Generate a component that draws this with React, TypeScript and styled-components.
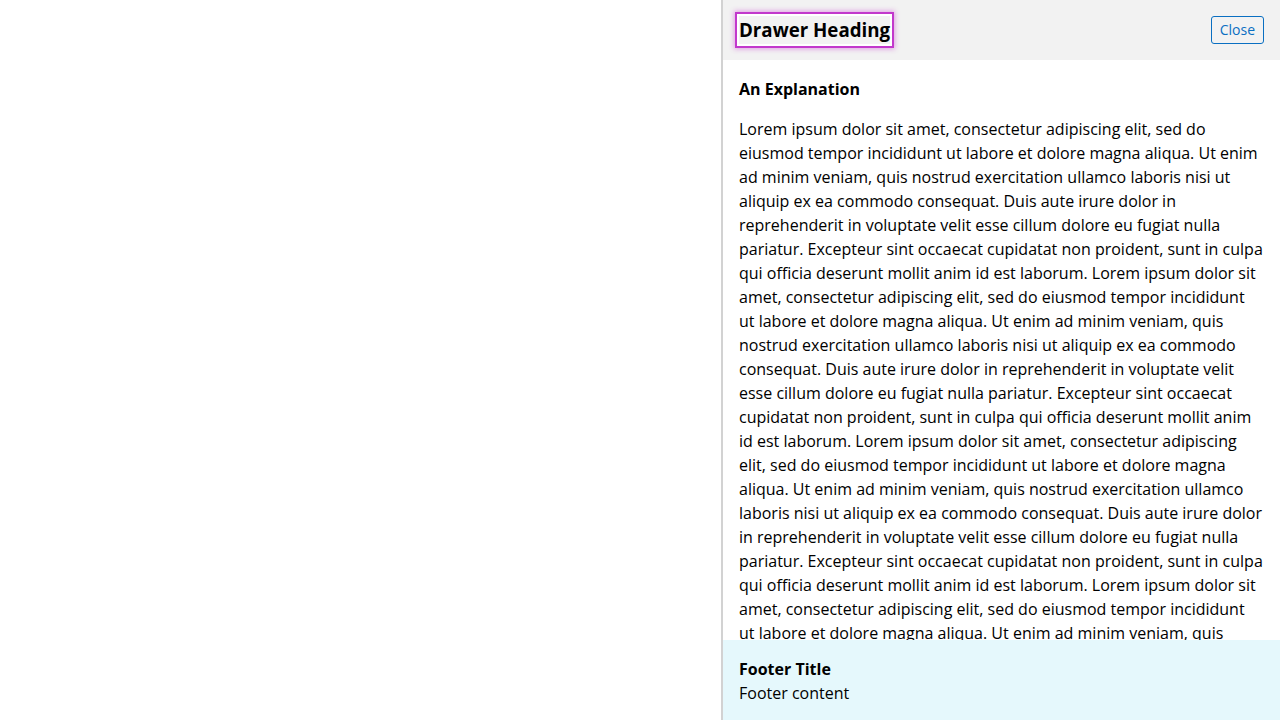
import { FC } from 'react';
import styled, { createGlobalStyle } from 'styled-components';

const GlobalStyle = createGlobalStyle`
  html, body, #root {
    margin: 0;
    height: 100%;
  }
  body {
    font-family: 'Open Sans', 'Noto Sans', sans-serif;
    color: #000;
    background: #fff;
  }
`;

const CSSPage = styled.div`
  display: flex;
  justify-content: flex-end;
  height: 100vh;
  overflow: hidden;
`;

const CSSDrawer = styled.aside`
  display: flex;
  flex-direction: column;
  width: 559px;
  height: 100%;
  box-sizing: border-box;
  border-left: 2px solid #d2d2d2;
  background: #fff;
`;

const CSSHeader = styled.header`
  display: flex;
  align-items: center;
  justify-content: space-between;
  height: 60px;
  flex-shrink: 0;
  padding: 0 16px;
  background: #f2f2f2;
`;

const CSSHeading = styled.h2`
  margin: 0;
  font-size: 18.72px;
  font-weight: 700;
  line-height: 28px;
  outline: none;
  box-shadow: 0 0 0 2px #fff, 0 0 0 4px #c238cc, 0 0 5px 5px rgba(200, 56, 208, 0.45);
`;

const CSSCloseButton = styled.button`
  font-family: inherit;
  font-size: 14px;
  line-height: 20px;
  padding: 3px 8px;
  color: #0a6fc2;
  background: transparent;
  border: 1px solid #0a6fc2;
  border-radius: 3px;
  cursor: pointer;
`;

const CSSBody = styled.div`
  flex: 1;
  overflow: hidden;
  padding: 17px 16px 16px;
`;

const CSSSubheading = styled.h3`
  margin: 0 0 16px;
  font-size: 16px;
  font-weight: 700;
  line-height: 24px;
`;

const CSSParagraph = styled.p`
  margin: 0;
  font-size: 16px;
  line-height: 24px;
`;

const CSSFooter = styled.footer`
  flex-shrink: 0;
  height: 80px;
  box-sizing: border-box;
  padding: 17px 16px 15px;
  background: #e5f8fc;
  font-size: 16px;
  line-height: 24px;
`;

const CSSFooterTitle = styled.div`
  font-weight: 700;
`;

const lorem =
  'Lorem ipsum dolor sit amet, consectetur adipiscing elit, sed do eiusmod tempor incididunt ut labore et dolore magna aliqua. Ut enim ad minim veniam, quis nostrud exercitation ullamco laboris nisi ut aliquip ex ea commodo consequat. Duis aute irure dolor in reprehenderit in voluptate velit esse cillum dolore eu fugiat nulla pariatur. Excepteur sint occaecat cupidatat non proident, sunt in culpa qui officia deserunt mollit anim id est laborum.';

const App: FC = () => {
  return (
    <>
      <GlobalStyle />
      <CSSPage>
        <CSSDrawer>
          <CSSHeader>
            <CSSHeading tabIndex={-1}>Drawer Heading</CSSHeading>
            <CSSCloseButton>Close</CSSCloseButton>
          </CSSHeader>
          <CSSBody>
            <CSSSubheading>An Explanation</CSSSubheading>
            <CSSParagraph>{new Array(5).fill(lorem).join(' ')}</CSSParagraph>
          </CSSBody>
          <CSSFooter>
            <CSSFooterTitle>Footer Title</CSSFooterTitle>
            <div>Footer content</div>
          </CSSFooter>
        </CSSDrawer>
      </CSSPage>
    </>
  );
};

export default App;
